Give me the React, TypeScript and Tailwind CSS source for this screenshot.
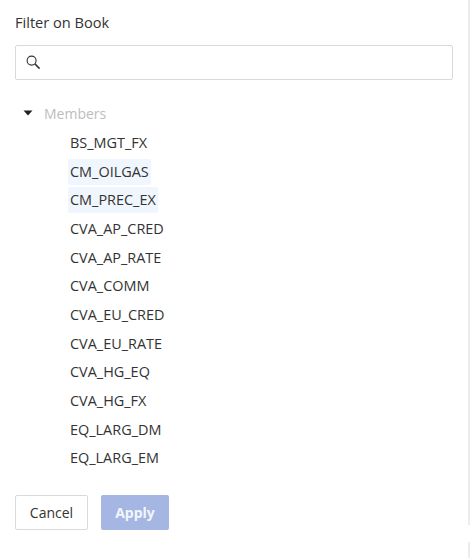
const rows = ["BS_MGT_FX","CM_OILGAS","CM_PREC_EX","CVA_AP_CRED","CVA_AP_RATE","CVA_COMM","CVA_EU_CRED","CVA_EU_RATE","CVA_HG_EQ","CVA_HG_FX","EQ_LARG_DM","EQ_LARG_EM"];
const selected = ["CM_OILGAS","CM_PREC_EX"];

export default function App() {
  return (
    <div className="relative w-[470px] h-[558px] bg-white overflow-hidden text-[#333333] font-['Open_Sans',sans-serif]">
      <div className="flex flex-col pl-[15px] pr-[17px] pt-[12px]">
        <div className="text-[14.6px] leading-[20px] font-medium text-[#333333]">Filter on Book</div>
        <div className="mt-[13px] h-[35px] w-[438px] border border-[#d9d9d9] rounded-[2px] flex items-center pl-[10px]">
          <svg width="15" height="15" viewBox="0 0 15 15" fill="none" stroke="#333333" className="mt-[-1px]">
            <circle cx="5.6" cy="5.6" r="4.5" strokeWidth="1.1" />
            <path d="M8.9 8.9L13.6 13.6" strokeWidth="1.5" />
          </svg>
        </div>
        <div className="mt-[19px] flex items-center h-[28px] pl-[8px]">
          <svg width="10" height="6" viewBox="0 0 10 6" className="fill-[#222222]"><path d="M0.5 0.5h9L5 5.5z" /></svg>
          <span className="ml-[11px] text-[14px] text-[#bdbdbd]">Members</span>
        </div>
        <div className="flex flex-col items-start pl-[53px] gap-[2.67px] mt-[3px]">
          {rows.map((r) => (
            <div key={r} className={`h-[26px] px-[2px] flex items-center rounded-[2px] text-[14.45px] ${selected.includes(r) ? "bg-[#f0f6fd]" : ""}`}>{r}</div>
          ))}
        </div>
        <div className="mt-[24px] flex gap-[13px]">
          <button className="w-[73px] h-[35px] border border-[#d9d9d9] rounded-[2px] bg-white text-[14px] text-[#333333]">Cancel</button>
          <button className="w-[68px] h-[35px] rounded-[2px] bg-[#a5b6e3] text-[14px] font-bold text-[#f2f5fc]">Apply</button>
        </div>
      </div>
      <div className="absolute right-0 top-0 w-[2px] h-[525px] bg-[#ececec]" />
      <div className="absolute right-0 top-[542px] w-[2px] h-[16px] bg-[#ececec]" />
    </div>
  );
}
